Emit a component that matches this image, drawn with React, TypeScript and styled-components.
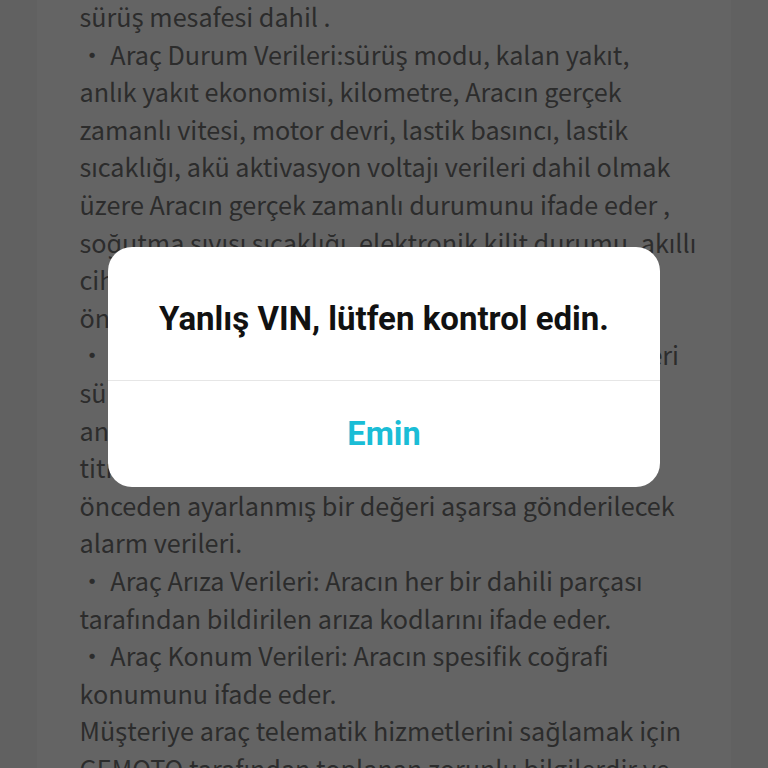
import React from "react";
import styled, { createGlobalStyle } from "styled-components";

const Global = createGlobalStyle`
  html, body { margin: 0; padding: 0; background: #616161; }
  body { width: 768px; height: 768px; overflow: hidden; }
`;

const Screen = styled.div`
  position: relative;
  width: 768px;
  height: 768px;
  overflow: hidden;
  background: #616161;
  display: flex;
  justify-content: center;
`;

const Column = styled.div`
  width: 694px;
  margin-left: -1px;
  background: #646464;
  height: 100%;
  overflow: hidden;
`;

const Article = styled.div`
  margin-top: -2px;
  padding-left: 43px;
  font-family: "Noto Sans CJK SC", "Noto Sans", sans-serif;
  font-size: 25.2px;
  line-height: 37.6px;
  color: #2c2c2c;
`;

const Line = styled.div`
  white-space: nowrap;
`;

const Overlay = styled.div`
  position: absolute;
  inset: 0;
  display: flex;
  align-items: center;
  justify-content: center;
`;

const Dialog = styled.div`
  width: 552px;
  background: #ffffff;
  border-radius: 24px;
  display: flex;
  flex-direction: column;
  overflow: hidden;
  transform: translateY(-17px);
`;

const Title = styled.div`
  height: 134px;
  box-sizing: border-box;
  padding-top: 10px;
  display: flex;
  align-items: center;
  justify-content: center;
  font-family: Roboto, "Liberation Sans", sans-serif;
  font-weight: 700;
  font-size: 33px;
  color: #111111;
  border-bottom: 1px solid #e6e6e6;
`;

const Action = styled.button`
  height: 106px;
  border: 0;
  background: transparent;
  font-family: Roboto, "Liberation Sans", sans-serif;
  font-weight: 700;
  font-size: 32.5px;
  color: #1abdd6;
  display: flex;
  align-items: center;
  justify-content: center;
  padding: 0;
`;

const lines: string[] = [
  "sürüş mesafesi dahil .",
  "・ Araç Durum Verileri:sürüş modu, kalan yakıt,",
  "anlık yakıt ekonomisi, kilometre, Aracın gerçek",
  "zamanlı vitesi, motor devri, lastik basıncı, lastik",
  "sıcaklığı, akü aktivasyon voltajı verileri dahil olmak",
  "üzere Aracın gerçek zamanlı durumunu ifade eder ,",
  "soğutma sıvısı sıcaklığı, elektronik kilit durumu, akıllı",
  "cihaz bağlantı durumu vb. dahil olmak üzere",
  "önemli bilgileri içerir.",
  "・ Araç Alarm Verileri: Aracın gerçek zamanlı verileri",
  "sürüş sırasında ani hızlanma, ani fren,",
  "ani dönüş, çarpışma, yuvarlanma, aşırı",
  "titreşim vb. durumlarda veriler",
  "önceden ayarlanmış bir değeri aşarsa gönderilecek",
  "alarm verileri.",
  "・ Araç Arıza Verileri: Aracın her bir dahili parçası",
  "tarafından bildirilen arıza kodlarını ifade eder.",
  "・ Araç Konum Verileri: Aracın spesifik coğrafi",
  "konumunu ifade eder.",
  "Müşteriye araç telematik hizmetlerini sağlamak için",
  "GEMOTO tarafından toplanan zorunlu bilgilerdir ve",
];

export default function App() {
  return (
    <>
      <Global />
      <Screen>
        <Column>
          <Article>
            {lines.map((l, i) => (
              <Line key={i}>{l}</Line>
            ))}
          </Article>
        </Column>
        <Overlay>
          <Dialog>
            <Title>Yanlış VIN, lütfen kontrol edin.</Title>
            <Action>Emin</Action>
          </Dialog>
        </Overlay>
      </Screen>
    </>
  );
}
